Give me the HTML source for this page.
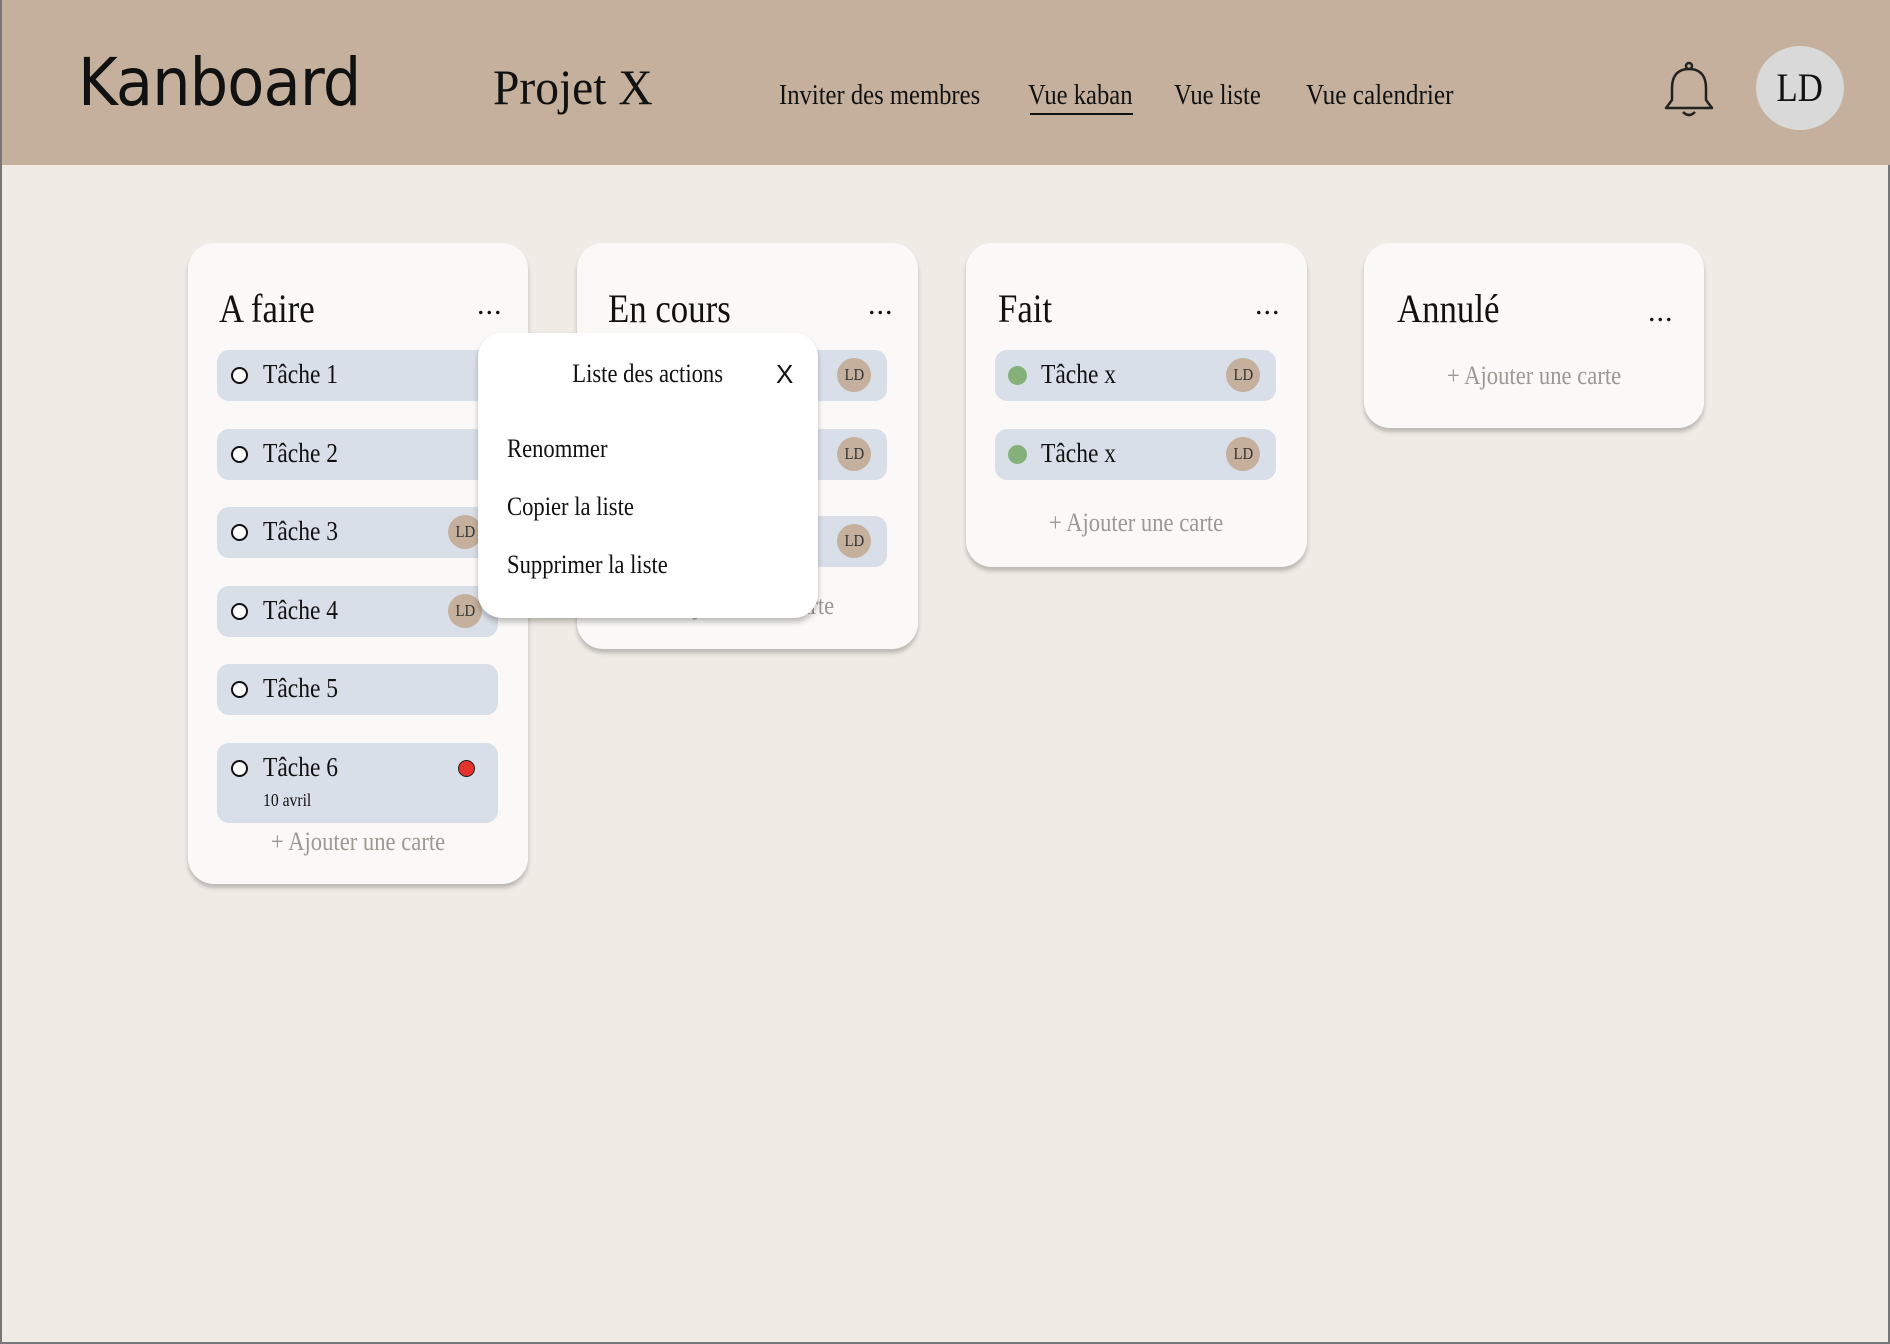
<!DOCTYPE html>
<html><head><meta charset="utf-8"><style>
*{margin:0;padding:0;box-sizing:border-box}
body{width:1890px;height:1344px;background:#f0ebe5;position:relative;overflow:hidden;font-family:"Liberation Serif",serif;color:#111;border-left:2px solid #777;border-right:2px solid #777;border-bottom:2px solid #777}
.a{position:absolute;white-space:nowrap}
.c{display:inline-block;transform:scaleX(.87);transform-origin:left center}
.cc{display:inline-block;transform:scaleX(.87);transform-origin:center}
header{position:absolute;left:0;top:0;width:1890px;height:165px;background:#c4b09c}
.card{position:absolute;background:#faf9f7;border-radius:26px;box-shadow:0 4px 4px rgba(0,0,0,.22)}
.title{font-size:40px;top:42px}
.dots{font-size:30px;top:45px;letter-spacing:1px}
.task{position:absolute;left:29px;width:281px;height:51px;background:#d9dfe8;border-radius:12px}
.task .ring{position:absolute;left:14px;top:17px;width:17px;height:17px;border:2px solid #111;border-radius:50%;background:#fff}
.task .gdot{position:absolute;left:13px;top:16px;width:19px;height:19px;border-radius:50%;background:#86b07a}
.task .txt{position:absolute;left:46px;top:9px;font-size:27px}
.ld{position:absolute;width:34px;height:34px;border-radius:50%;background:#c4b09c;top:8px;font-size:17px;text-align:center;line-height:34px;color:#333}
.add{font-size:26px;color:#9e9893;width:100%;text-align:center}
</style></head><body>
<header>
<div class="a" style="left:76px;top:44px;font-family:'DejaVu Sans',sans-serif;font-size:66px;letter-spacing:-1px"><span class="c" style="transform:scaleX(.92)">Kanboard</span></div>
<div class="a" style="left:491px;top:58px;font-size:50px"><span class="c" style="transform:scaleX(.95)">Projet X</span></div>
<div class="a" style="left:777px;top:80px;font-size:28px"><span class="c" style="transform:scaleX(.88)">Inviter des membres</span></div>
<div class="a" style="left:1026px;top:80px;font-size:28px"><span class="c" style="transform:scaleX(.88)">Vue kaban</span></div>
<div class="a" style="left:1028px;top:113px;width:103px;height:2px;background:#111"></div>
<div class="a" style="left:1172px;top:80px;font-size:28px"><span class="c" style="transform:scaleX(.88)">Vue liste</span></div>
<div class="a" style="left:1304px;top:80px;font-size:28px"><span class="c" style="transform:scaleX(.9)">Vue calendrier</span></div>
<svg class="a" style="left:1660px;top:60px" width="54" height="60" viewBox="0 0 54 60" fill="none" stroke="#222" stroke-width="2.5" stroke-linejoin="round"><circle cx="27" cy="6" r="3"/><path d="M27 9 C14 9 10 18 10 28 L10 40 L4 48 L50 48 L44 40 L44 28 C44 18 40 9 27 9 Z"/><path d="M21 52 Q27 58 33 52"/></svg>
<div class="a" style="left:1754px;top:46px;width:88px;height:84px;border-radius:50%;background:#d9d9d9;text-align:center;line-height:84px;font-size:40px"><span class="cc">LD</span></div>
</header>

<div class="card" style="left:186px;top:243px;width:340px;height:641px">
<div class="a title" style="left:31px"><span class="c">A faire</span></div>
<div class="a dots" style="left:289px">...</div>
<div class="task" style="top:107px"><div class="ring"></div><div class="txt"><span class="c">Tâche 1</span></div></div>
<div class="task" style="top:186px"><div class="ring"></div><div class="txt"><span class="c">Tâche 2</span></div></div>
<div class="task" style="top:264px"><div class="ring"></div><div class="txt"><span class="c">Tâche 3</span></div><div class="ld" style="left:231px"><span class="cc">LD</span></div></div>
<div class="task" style="top:343px"><div class="ring"></div><div class="txt"><span class="c">Tâche 4</span></div><div class="ld" style="left:231px"><span class="cc">LD</span></div></div>
<div class="task" style="top:421px"><div class="ring"></div><div class="txt"><span class="c">Tâche 5</span></div></div>
<div class="task" style="top:500px;height:80px"><div class="ring"></div><div class="txt"><span class="c">Tâche 6</span></div><div class="a" style="left:46px;top:47px;font-size:18px"><span class="c">10 avril</span></div><div class="a" style="left:241px;top:17px;width:17px;height:17px;border-radius:50%;background:#e5322a;border:1px solid #222"></div></div>
<div class="a add" style="left:0;top:584px"><span class="cc">+ Ajouter une carte</span></div>
</div>

<div class="card" style="left:575px;top:243px;width:341px;height:406px">
<div class="a title" style="left:31px"><span class="c">En cours</span></div>
<div class="a dots" style="left:291px">...</div>
<div class="task" style="top:107px"><div class="ld" style="left:231px"><span class="cc">LD</span></div></div>
<div class="task" style="top:186px"><div class="ld" style="left:231px"><span class="cc">LD</span></div></div>
<div class="task" style="top:273px"><div class="ld" style="left:231px"><span class="cc">LD</span></div></div>
<div class="a add" style="left:0;top:348px"><span class="cc">+ Ajouter une carte</span></div>
</div>

<div class="card" style="left:964px;top:243px;width:341px;height:324px">
<div class="a title" style="left:32px"><span class="c">Fait</span></div>
<div class="a dots" style="left:289px">...</div>
<div class="task" style="top:107px"><div class="gdot"></div><div class="txt"><span class="c">Tâche x</span></div><div class="ld" style="left:231px"><span class="cc">LD</span></div></div>
<div class="task" style="top:186px"><div class="gdot"></div><div class="txt"><span class="c">Tâche x</span></div><div class="ld" style="left:231px"><span class="cc">LD</span></div></div>
<div class="a add" style="left:0;top:265px"><span class="cc">+ Ajouter une carte</span></div>
</div>

<div class="card" style="left:1362px;top:243px;width:340px;height:185px">
<div class="a title" style="left:33px"><span class="c">Annulé</span></div>
<div class="a dots" style="left:284px;top:52px">...</div>
<div class="a add" style="left:0;top:118px"><span class="cc">+ Ajouter une carte</span></div>
</div>

<div class="a" style="left:476px;top:333px;width:340px;height:285px;background:#fff;border-radius:24px;box-shadow:0 4px 6px rgba(0,0,0,.25)">
<div class="a" style="left:0;width:340px;top:26px;text-align:center;font-size:26px"><span class="cc">Liste des actions</span></div>
<div class="a" style="left:298px;top:26px;font-family:'Liberation Sans',sans-serif;font-size:26px">X</div>
<div class="a" style="left:29px;top:101px;font-size:26px"><span class="c">Renommer</span></div>
<div class="a" style="left:29px;top:159px;font-size:26px"><span class="c">Copier la liste</span></div>
<div class="a" style="left:29px;top:217px;font-size:26px"><span class="c">Supprimer la liste</span></div>
</div>
</body></html>
